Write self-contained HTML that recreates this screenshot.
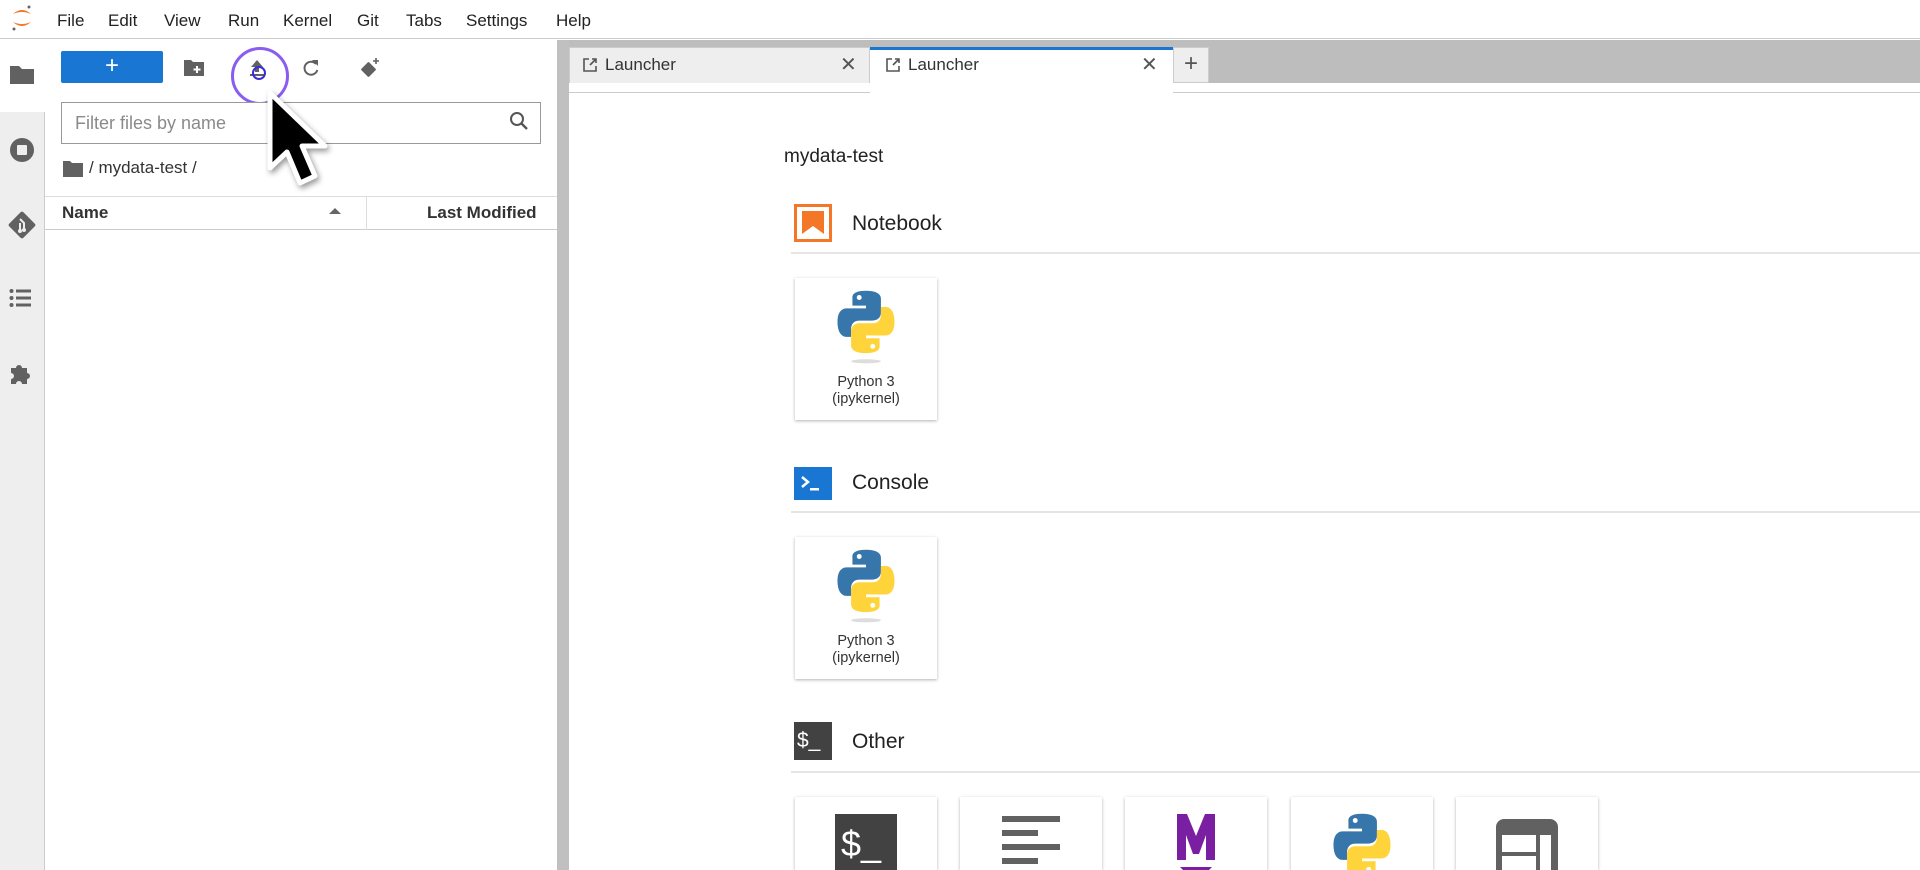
<!DOCTYPE html>
<html><head><meta charset="utf-8"><style>
*{box-sizing:border-box;margin:0;padding:0}
html,body{width:1920px;height:870px;overflow:hidden}
body{background:#fff;font-family:"Liberation Sans",sans-serif;color:#222}
#root{position:relative;width:1920px;height:870px;overflow:hidden}
.abs{position:absolute}
.menu span{position:absolute;top:11px;font-size:17px;color:#222}
.card{position:absolute;width:142px;height:142px;background:#fff;box-shadow:0 1px 3px rgba(0,0,0,.3);text-align:center;overflow:hidden}
.card.o{height:73px}
.card .lbl{position:absolute;top:96px;width:100%;font-size:14.5px;line-height:17px;color:#333}
.hdr{position:absolute;left:852px;font-size:21px;color:#222}
.hr{position:absolute;left:791px;right:0;height:2px;background:#e5e5e5}
</style></head><body><div id="root">
<div class="abs" style="left:0;top:0;width:1920px;height:39px;border-bottom:1px solid #ccc;background:#fff"></div>
<svg class="abs" style="left:9px;top:3px" width="26" height="30" viewBox="0 0 26 30"><path d="M4 11 Q13 3 22 11 Q13 7 4 11Z" fill="#f37726"/><path d="M4 19 Q13 27 22 19 Q13 23 4 19Z" fill="#f37726"/><circle cx="20" cy="4" r="1.5" fill="#666"/><circle cx="5" cy="26" r="1.5" fill="#666"/></svg>
<div class="menu">
<span style="left:57px">File</span><span style="left:108px">Edit</span><span style="left:164px">View</span><span style="left:228px">Run</span><span style="left:283px">Kernel</span><span style="left:357px">Git</span><span style="left:406px">Tabs</span><span style="left:466px">Settings</span><span style="left:556px">Help</span>
</div>
<div class="abs" style="left:0;top:40px;width:45px;height:830px;background:#eee;border-right:1px solid #ccc"></div>
<div class="abs" style="left:0;top:40px;width:45px;height:72px;background:#fff"></div>
<svg class="abs" style="left:9px;top:63px" width="26" height="22" viewBox="0 0 26 22"><path d="M1 3h9l3 3h12v15H1z" fill="#616161"/></svg>
<svg class="abs" style="left:8px;top:136px" width="28" height="28"><circle cx="14" cy="14" r="12" fill="#616161"/><rect x="9" y="9" width="10" height="10" rx="1" fill="#eee"/></svg>
<svg class="abs" style="left:7px;top:210px" width="30" height="30" viewBox="0 0 30 30"><rect x="5" y="5" width="20" height="20" rx="2" transform="rotate(45 15 15)" fill="#616161"/><path d="M13 9l4 4v7M13 13v8" stroke="#eee" stroke-width="2" fill="none"/><circle cx="13" cy="21" r="2" fill="#eee"/><circle cx="17" cy="20" r="2" fill="#eee"/></svg>
<svg class="abs" style="left:9px;top:288px" width="24" height="20"><g fill="#616161"><circle cx="2.5" cy="3" r="2"/><circle cx="2.5" cy="10" r="2"/><circle cx="2.5" cy="17" r="2"/><rect x="7" y="1.5" width="15" height="3"/><rect x="7" y="8.5" width="15" height="3"/><rect x="7" y="15.5" width="15" height="3"/></g></svg>
<svg class="abs" style="left:8px;top:359px" width="28" height="28" viewBox="0 0 28 28"><path d="M3 9h5a3 3 0 1 1 6 0h5v5a3 3 0 1 1 0 6v5h-5a3 3 0 1 0-6 0H3v-5a3 3 0 1 0 0-6z" fill="#616161"/></svg>
<div class="abs" style="left:61px;top:51px;width:102px;height:32px;background:#1976d2;border-radius:2px;color:#fff;text-align:center;font-size:24px;line-height:30px">+</div>
<svg class="abs" style="left:184px;top:59px" width="20" height="17" viewBox="0 0 20 17"><path d="M0 1h7l2 2h11v14H0z" fill="#616161"/><path d="M13 7v7M9.5 10.5h7" stroke="#fff" stroke-width="2"/></svg>
<svg class="abs" style="left:247px;top:58px" width="20" height="20" viewBox="0 0 20 20"><path d="M10 2l6 7h-4v5H8V9H4z" fill="#616161"/><rect x="3" y="16" width="14" height="2" fill="#616161"/></svg>
<svg class="abs" style="left:302px;top:59px" width="18" height="18" viewBox="0 0 18 18"><path d="M14 5A6.5 6.5 0 1 0 15.3 11" stroke="#616161" stroke-width="2" fill="none"/><path d="M10 1h6v6z" fill="#616161"/></svg>
<svg class="abs" style="left:358px;top:56px" width="24" height="24" viewBox="0 0 24 24"><rect x="5" y="8" width="11" height="11" rx="1" transform="rotate(45 10.5 13.5)" fill="#616161"/><path d="M18 2v6M15 5h6" stroke="#616161" stroke-width="1.6"/></svg>
<div class="abs" style="left:231px;top:47px;width:58px;height:58px;border:3px solid #8a5cf0;border-radius:50%"></div>
<div class="abs" style="left:252px;top:66px;width:14px;height:14px;border:2.5px solid #3a2bd8;border-radius:50%"></div>
<div class="abs" style="left:61px;top:102px;width:480px;height:42px;border:1px solid #999;background:#fff"></div>
<div class="abs" style="left:75px;top:113px;font-size:18px;color:#8a8a8a">Filter files by name</div>
<svg class="abs" style="left:509px;top:111px" width="20" height="20" viewBox="0 0 20 20"><circle cx="8" cy="8" r="6" stroke="#555" stroke-width="2" fill="none"/><path d="M12.5 12.5l5.5 5.5" stroke="#555" stroke-width="2.4"/></svg>
<svg class="abs" style="left:63px;top:160px" width="20" height="17" viewBox="0 0 20 17"><path d="M0 1h7l2 2h11v14H0z" fill="#616161"/></svg>
<div class="abs" style="left:89px;top:158px;font-size:17px;color:#333">/ mydata-test /</div>
<div class="abs" style="left:45px;top:196px;width:512px;height:34px;border-top:1px solid #ddd;border-bottom:1px solid #ccc"></div>
<div class="abs" style="left:366px;top:196px;width:1px;height:34px;background:#ddd"></div>
<div class="abs" style="left:62px;top:203px;font-size:17px;font-weight:bold;color:#333">Name</div>
<div class="abs" style="left:329px;top:208px;width:0;height:0;border-left:6px solid transparent;border-right:6px solid transparent;border-bottom:6px solid #666"></div>
<div class="abs" style="left:427px;top:203px;font-size:17px;font-weight:bold;color:#333">Last Modified</div>
<svg class="abs" style="left:265px;top:88px" width="80" height="110" viewBox="0 0 80 110"><path d="M5 5 L5 80 L22 64 L35 95 L50 88 L37 58 L60 58 Z" fill="#000" stroke="#fff" stroke-width="5" stroke-linejoin="round" style="filter:drop-shadow(2px 3px 3px rgba(0,0,0,.4))"/></svg>
<div class="abs" style="left:557px;top:40px;width:12px;height:830px;background:#c0c0c0"></div>
<div class="abs" style="left:569px;top:40px;width:1351px;height:43px;background:#bdbdbd"></div>
<div class="abs" style="left:569px;top:83px;width:1351px;height:10px;background:#fff;border-bottom:1px solid #ccc"></div>
<div class="abs" style="left:569px;top:47px;width:301px;height:36px;background:#eee;border:1px solid #ccc;border-bottom:none"></div>
<div class="abs" style="left:870px;top:47px;width:303px;height:47px;background:#fff;border-top:3px solid #1976d2"></div>
<div class="abs" style="left:1173px;top:47px;width:36px;height:36px;background:#eee;border:1px solid #ccc;font-size:24px;text-align:center;line-height:32px;color:#555">+</div>
<svg class="abs" style="left:582px;top:57px" width="16" height="16" viewBox="0 0 16 16"><path d="M7 2H2v12h12V9" stroke="#555" stroke-width="1.6" fill="none"/><path d="M8 8l6-6M10 2h4v4" stroke="#555" stroke-width="1.6" fill="none"/></svg>
<div class="abs" style="left:605px;top:55px;font-size:17px;color:#333">Launcher</div>
<div class="abs" style="left:840px;top:52px;font-size:20px;color:#555">✕</div>
<svg class="abs" style="left:885px;top:57px" width="16" height="16" viewBox="0 0 16 16"><path d="M7 2H2v12h12V9" stroke="#555" stroke-width="1.6" fill="none"/><path d="M8 8l6-6M10 2h4v4" stroke="#555" stroke-width="1.6" fill="none"/></svg>
<div class="abs" style="left:908px;top:55px;font-size:17px;color:#333">Launcher</div>
<div class="abs" style="left:1141px;top:52px;font-size:20px;color:#555">✕</div>
<div class="abs" style="left:784px;top:146px;font-size:19px;color:#222">mydata-test</div>
<svg class="abs" style="left:794px;top:204px" width="38" height="38" viewBox="0 0 38 38"><rect x="1.5" y="1.5" width="35" height="35" fill="#fff" stroke="#f37726" stroke-width="3"/><path d="M8 7h22v23l-11-8-11 8z" fill="#f37726"/></svg>
<div class="hdr" style="top:212px">Notebook</div>
<div class="hr" style="top:252px"></div>
<svg class="abs" style="left:794px;top:467px" width="38" height="33"><rect width="38" height="33" fill="#1976d2"/><path d="M8 10l6 5-6 5" stroke="#fff" stroke-width="2.5" fill="none"/><rect x="16" y="21" width="9" height="2.5" fill="#fff"/></svg>
<div class="hdr" style="top:471px">Console</div>
<div class="hr" style="top:511px"></div>
<div class="abs" style="left:794px;top:722px;width:38px;height:38px;background:#424242;color:#fff;font-size:21px;line-height:38px;padding-left:3px">$_</div>
<div class="hdr" style="top:730px">Other</div>
<div class="hr" style="top:771px"></div>
<svg width="0" height="0" style="position:absolute"><defs><g id="py"><path d="M24 2c-11 0-10 5-10 5v6h10v2H10S3 14 3 25s6 11 6 11h4v-6s0-6 6-6h10s6 0 6-6V8s1-6-11-6z" fill="#3776ab"/><circle cx="19" cy="7" r="1.8" fill="#fff"/><path d="M24 48c11 0 10-5 10-5v-6H24v-2h14s7 1 7-10-6-11-6-11h-4v6s0 6-6 6H19s-6 0-6 6v10s-1 6 11 6z" fill="#ffd43b"/><circle cx="29" cy="43" r="1.8" fill="#fff"/></g></defs></svg>
<div class="card" style="left:795px;top:278px"><svg style="position:absolute;left:38px;top:10px" width="66" height="76" viewBox="0 0 48 56"><use href="#py"/><ellipse cx="24" cy="54" rx="11" ry="1.5" fill="#ddd"/></svg><div class="lbl">Python 3<br>(ipykernel)</div></div>
<div class="card" style="left:795px;top:537px"><svg style="position:absolute;left:38px;top:10px" width="66" height="76" viewBox="0 0 48 56"><use href="#py"/><ellipse cx="24" cy="54" rx="11" ry="1.5" fill="#ddd"/></svg><div class="lbl">Python 3<br>(ipykernel)</div></div>
<div class="card o" style="left:795px;top:797px"><div style="position:absolute;left:40px;top:17px;width:62px;height:80px;background:#424242;color:#fff;font-size:36px;line-height:40px;padding:10px 0 0 6px;text-align:left">$_</div></div>
<div class="card o" style="left:960px;top:797px"><svg style="position:absolute;left:42px;top:19px" width="58" height="70"><g fill="#616161"><rect width="58" height="6"/><rect y="14" width="36" height="6"/><rect y="28" width="58" height="6"/><rect y="42" width="36" height="6"/><rect y="56" width="58" height="6"/></g></svg></div>
<div class="card o" style="left:1125px;top:797px"><svg style="position:absolute;left:51px;top:16px" width="40" height="70"><path d="M1 1h10l9 22 9-22h10v46h-9V22l-7 19h-6l-7-19v25H1z" fill="#7b1fa2"/><path d="M4 54h32L20 70z" fill="#7b1fa2"/></svg></div>
<div class="card o" style="left:1291px;top:797px"><svg style="position:absolute;left:38px;top:14px" width="66" height="76" viewBox="0 0 48 56"><use href="#py"/></svg></div>
<div class="card o" style="left:1456px;top:797px"><svg style="position:absolute;left:40px;top:22px" width="62" height="60"><rect width="62" height="60" rx="8" fill="#616161"/><rect x="6" y="16" width="34" height="17" fill="#fff"/><rect x="6" y="37" width="34" height="17" fill="#fff"/><rect x="44" y="16" width="11" height="38" fill="#fff"/></svg></div>
</div></body></html>
